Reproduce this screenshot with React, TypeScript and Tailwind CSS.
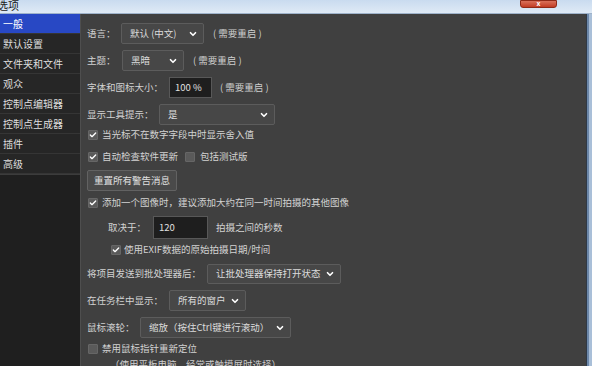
import { ChevronDown, Check } from "lucide-react";

const font = { fontFamily: '"Noto Sans CJK SC", "Noto Sans", sans-serif' };

const navItems = ["一般", "默认设置", "文件夹和文件", "观众", "控制点编辑器", "控制点生成器", "插件", "高级"];

function Select({ value, width }: { value: string; width: string }) {
  return (
    <div className={`${width} h-full flex items-center justify-between pl-[8px] pr-[5px] bg-[#474747] border border-[#5c5c5c] rounded-[2px] text-[#dcdcdc]`}>
      <span>{value}</span>
      <ChevronDown className="h-[10px] w-[10px] text-white" strokeWidth={4} />
    </div>
  );
}

function Box({ checked }: { checked?: boolean }) {
  return (
    <div className="w-[10px] h-[10px] flex items-center justify-center bg-[#5a5a5a] border border-[#666] rounded-[1px]">
      {checked && <Check className="h-[8px] w-[8px] text-white" strokeWidth={4} />}
    </div>
  );
}

const Restart = ({ ml }: { ml: string }) => (
  <span className={`${ml} text-[#cfcfcf]`}>(&nbsp;需要重启&nbsp;)</span>
);

export default function App() {
  return (
    <div className="w-[592px] h-[366px] overflow-hidden flex flex-col bg-[#404040] text-[9.5px] leading-none" style={font}>
      {/* title bar */}
      <div className="h-[14px] shrink-0 flex items-end justify-between bg-gradient-to-b from-[#c9dbef] to-[#dfeaf6] border-b border-[#9fb3cb]">
        <span className="ml-[-3px] mb-[2px] text-[11px] text-[#1a1a1a]">选项</span>
        <div className="self-start mr-[35px] w-[37px] h-[8px] rounded-b-[3px] bg-gradient-to-b from-[#d9705a] to-[#c23a22] border border-[#8f2a18] flex items-center justify-center overflow-hidden">
          <span className="text-white text-[7px] leading-none font-bold -mt-[2px]">x</span>
        </div>
      </div>

      <div className="flex flex-1 min-h-0">
        {/* sidebar */}
        <div className="w-[81px] shrink-0 bg-[#1f1f1f] border-r border-[#4e4e4e] flex flex-col">
          <div className="border-b border-[#3c3c3c]">
            {navItems.map((item, i) => (
              <div
                key={item}
                className={`h-[20px] flex items-center pl-[3px] text-[10px] border-b border-[#353535] ${
                  i === 0 ? "bg-[#2848c4] text-white" : "bg-[#262626] text-[#dedede]"
                }`}
              >
                {item}
              </div>
            ))}
          </div>
        </div>

        {/* main */}
        <div className="flex-1 flex flex-col pl-[6px] pt-[9px] text-[#d2d2d2] overflow-hidden">
          <div className="h-[21px] shrink-0 flex items-center">
            <span className="w-[34px]">语言：</span>
            <Select value="默认 (中文)" width="w-[83px]" />
            <Restart ml="ml-[9px]" />
          </div>
          <div className="h-[21px] shrink-0 mt-[6px] flex items-center">
            <span className="w-[35px]">主题：</span>
            <Select value="黑暗" width="w-[62px]" />
            <Restart ml="ml-[9px]" />
          </div>
          <div className="h-[21px] shrink-0 mt-[6px] flex items-center">
            <span className="w-[82px]">字体和图标大小：</span>
            <div className="w-[43px] h-full flex items-center pl-[5px] bg-[#1e1e1e] border border-[#585858] text-[#e0e0e0]">100 %</div>
            <Restart ml="ml-[8px]" />
          </div>
          <div className="h-[21px] shrink-0 mt-[6px] flex items-center">
            <span className="w-[72px]">显示工具提示：</span>
            <Select value="是" width="w-[116px]" />
          </div>
          <div className="h-[14px] shrink-0 mt-[3px] flex items-center pl-[1px]">
            <Box checked />
            <span className="ml-[4px]">当光标不在数字字段中时显示舍入值</span>
          </div>
          <div className="h-[14px] shrink-0 mt-[8px] flex items-center pl-[1px]">
            <Box checked />
            <span className="ml-[4px]">自动检查软件更新</span>
            <div className="ml-[7px]"><Box /></div>
            <span className="ml-[5px]">包括测试版</span>
          </div>
          <div className="h-[21px] shrink-0 mt-[6px] flex">
            <div className="px-[6px] flex items-center bg-[#4a4a4a] border border-[#626262] rounded-[2px] text-[#e0e0e0]">重置所有警告消息</div>
          </div>
          <div className="h-[14px] shrink-0 mt-[5px] flex items-center pl-[1px]">
            <Box checked />
            <span className="ml-[4px]">添加一个图像时，建议添加大约在同一时间拍摄的其他图像</span>
          </div>
          <div className="h-[23px] shrink-0 mt-[6px] flex items-center pl-[21px]">
            <span className="w-[45px]">取决于：</span>
            <div className="w-[55px] h-full flex items-center pl-[5px] bg-[#1e1e1e] border border-[#585858] text-[#e0e0e0]">120</div>
            <span className="ml-[8px]">拍摄之间的秒数</span>
          </div>
          <div className="h-[14px] shrink-0 mt-[4px] flex items-center pl-[24px]">
            <Box checked />
            <span className="ml-[3px]">使用EXIF数据的原始拍摄日期/时间</span>
          </div>
          <div className="h-[20px] shrink-0 mt-[7px] flex items-center">
            <span className="w-[120px]">将项目发送到批处理器后：</span>
            <Select value="让批处理器保持打开状态" width="w-[134px]" />
          </div>
          <div className="h-[21px] shrink-0 mt-[6px] flex items-center">
            <span className="w-[82px]">在任务栏中显示：</span>
            <Select value="所有的窗户" width="w-[77px]" />
          </div>
          <div className="h-[21px] shrink-0 mt-[6px] flex items-center">
            <span className="w-[53px]">鼠标滚轮：</span>
            <Select value="缩放（按住Ctrl键进行滚动）" width="w-[151px]" />
          </div>
          <div className="h-[14px] shrink-0 mt-[4px] flex items-center pl-[1px]">
            <Box />
            <span className="ml-[4px]">禁用鼠标指针重新定位</span>
          </div>
          <div className="shrink-0 mt-[4px] pl-[23px] text-[#cfcfcf]">（使用平板电脑，经常或触摸屏时选择）</div>
        </div>

        {/* window frame */}
        <div className="w-[6px] shrink-0 flex">
          <div className="w-[1px] bg-[#2f3a48]" />
          <div className="w-[2px] bg-[#6d88aa]" />
          <div className="w-[3px] bg-[#a9bfd8]" />
        </div>
      </div>
    </div>
  );
}
